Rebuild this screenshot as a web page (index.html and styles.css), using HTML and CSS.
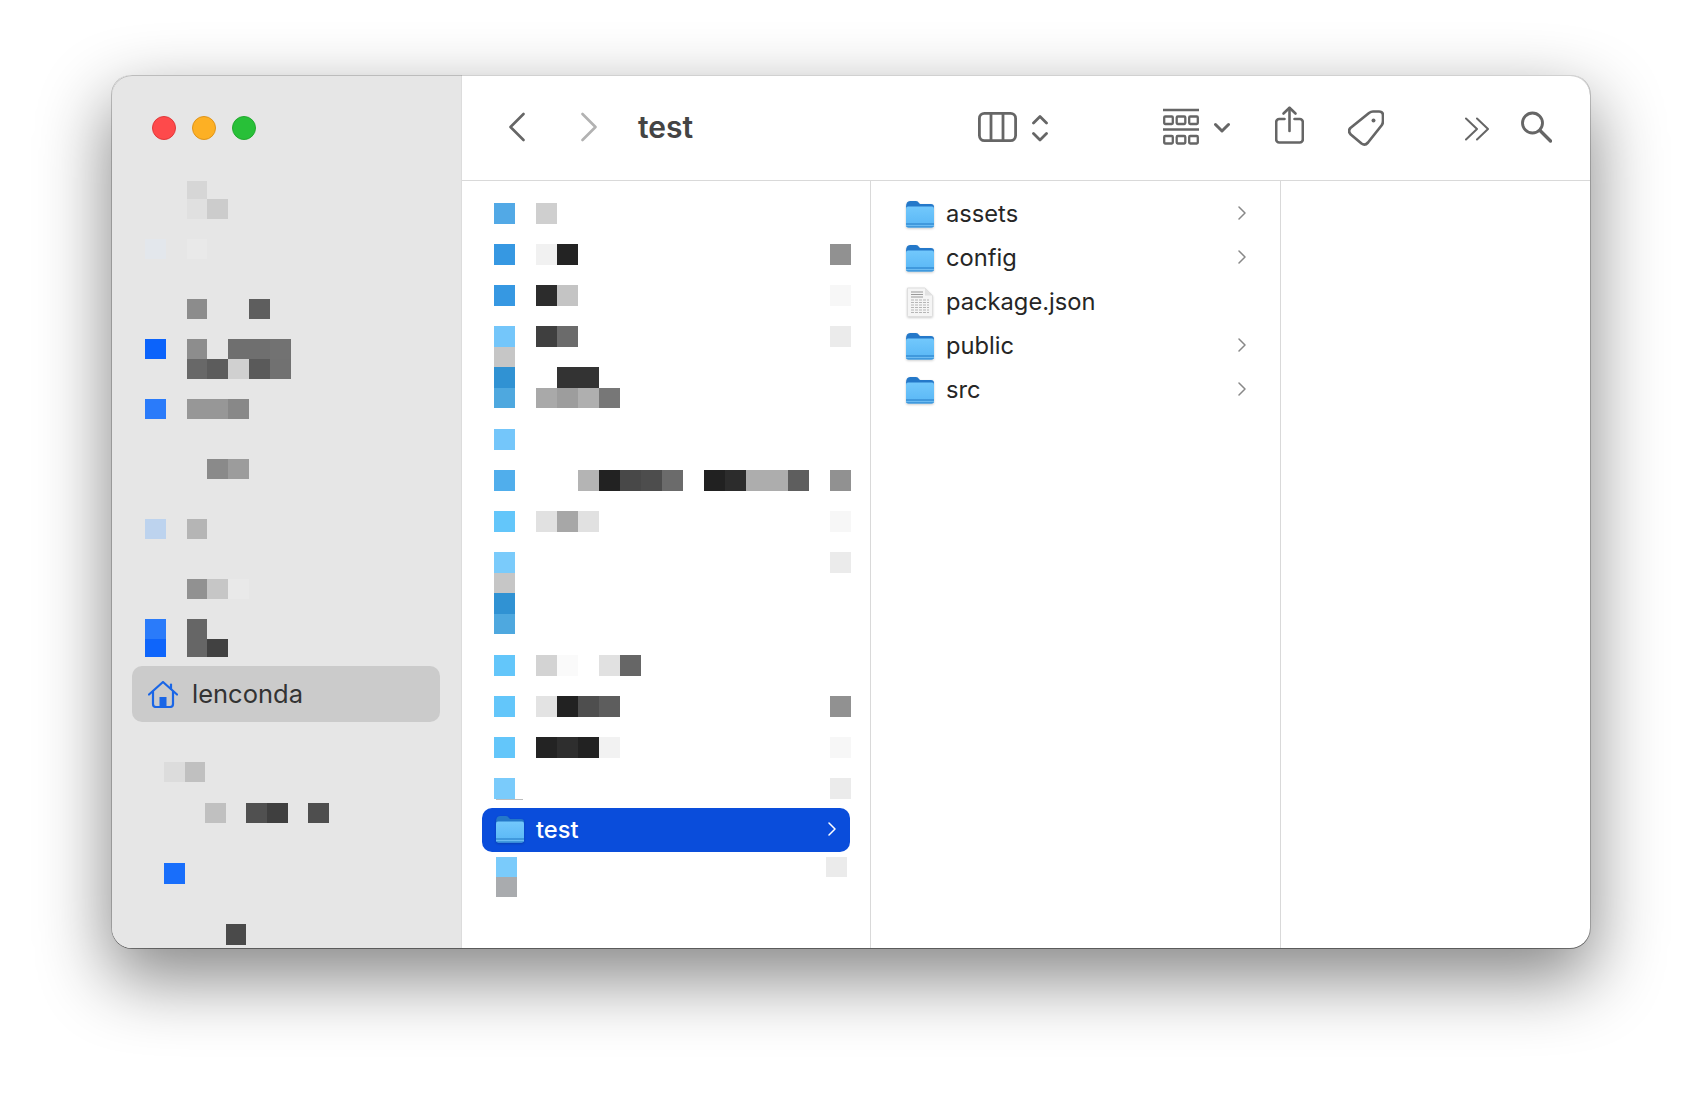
FILE: index.html
```html
<!DOCTYPE html>
<html lang="en">
<head>
    <meta charset="UTF-8">
    <meta name="viewport" content="width=device-width, initial-scale=1.0">
    <title>test</title>
    <link rel="stylesheet" href="styles.css">
</head>
<body>
    <svg class="defs" width="0" height="0">
        <defs>
            <linearGradient id="folderBody" x1="0" y1="0" x2="0" y2="1">
                <stop offset="0" stop-color="#72c8fc"/>
                <stop offset="1" stop-color="#58b6f5"/>
            </linearGradient>
            <symbol id="folder" viewBox="0 0 28 27">
                <path d="M0 6Q0 0 4 0H10Q12 0 13 2L14 3H25Q28 3 28 6V12H0Z" fill="#2478c9"/>
                <path d="M0 7.5Q0 5.5 2 5.5H26Q28 5.5 28 7.5V24Q28 26.5 25.5 26.5H2.5Q0 26.5 0 24Z" fill="url(#folderBody)"/>
                <path d="M0 22H28V24Q28 26.5 25.5 26.5H2.5Q0 26.5 0 24Z" fill="#4099dd"/>
                <path d="M0 24H28V24.8H0Z" fill="#78c4f6"/>
            </symbol>
            <symbol id="chevron" viewBox="0 0 8 14">
                <polyline points="1,1 7,7 1,13" fill="none" stroke="currentColor" stroke-width="1.5" stroke-linecap="round" stroke-linejoin="round"/>
            </symbol>
        </defs>
    </svg>

    <div class="window">
        <!-- Sidebar -->
        <aside class="sidebar">
            <div class="lights">
                <span class="light red"></span>
                <span class="light orange"></span>
                <span class="light green"></span>
            </div>

            <div class="side-top">
                <div class="side-row short"><i></i><i></i><i class="gd6"></i></div>
                <div class="side-row"><i></i><i></i><i class="ge0"></i><i class="gcc"></i></div>
                <div class="side-row"></div>
                <div class="side-row"><i class="s1"></i><i></i><i class="ge9"></i></div>
                <div class="side-row"></div>
                <div class="side-row"></div>
                <div class="side-row"><i></i><i></i><i class="g8c"></i><i></i><i></i><i class="g5e"></i></div>
                <div class="side-row"></div>
                <div class="side-row"><i class="s2"></i><i></i><i class="g8d"></i><i></i><i class="g6f"></i><i class="g6f"></i><i class="g72"></i></div>
                <div class="side-row"><i></i><i></i><i class="g68"></i><i class="g5c"></i><i class="gd0"></i><i class="g5a"></i><i class="g71"></i></div>
                <div class="side-row"></div>
                <div class="side-row"><i class="s3"></i><i></i><i class="g97"></i><i class="g97"></i><i class="g88"></i></div>
                <div class="side-row"></div>
                <div class="side-row"></div>
                <div class="side-row"><i></i><i></i><i></i><i class="g8a"></i><i class="g9c"></i></div>
                <div class="side-row"></div>
                <div class="side-row"></div>
                <div class="side-row"><i class="s4"></i><i></i><i class="gb5"></i></div>
                <div class="side-row"></div>
                <div class="side-row"></div>
                <div class="side-row"><i></i><i></i><i class="g91"></i><i class="gc6"></i><i class="ge9"></i></div>
                <div class="side-row"></div>
                <div class="side-row"><i class="s3"></i><i></i><i class="g66"></i></div>
                <div class="side-row short"><i class="s5"></i><i></i><i class="g66"></i><i class="g41"></i></div>
            </div>

            <div class="side-item">
                <svg class="home" width="30" height="27" viewBox="0 0 30 27" fill="none" stroke="#1a66e6" stroke-width="2.2" stroke-linecap="round" stroke-linejoin="round">
                    <path d="M1 13.5L15 1L29 13.5"/>
                    <path d="M23 8V3.5"/>
                    <path d="M5 10.5V23Q5 26 8 26H22Q25 26 25 23V10.5"/>
                    <rect x="11.5" y="16" width="7" height="10" fill="#1a66e6" stroke="none"/>
                </svg>
                <span class="side-label">lenconda</span>
            </div>

            <div class="side-bottom">
                <div class="low-row"><i class="gdc"></i><i class="gc0"></i></div>
                <div class="low-row"></div>
                <div class="low-row"><i></i><i></i><i class="gc0"></i><i></i><i class="g50"></i><i class="g3f"></i><i></i><i class="g4e"></i></div>
                <div class="low-row"></div>
                <div class="low-row"></div>
                <div class="low-row"><i class="s6"></i></div>
                <div class="low-row"></div>
                <div class="low-row"></div>
                <div class="low-row"><i></i><i></i><i></i><i class="g4a"></i></div>
            </div>
        </aside>

        <div class="content">
            <!-- Toolbar -->
            <header class="toolbar">
                <svg class="back" width="16" height="44" viewBox="0 0 16 44" fill="none" stroke="#666" stroke-width="2.6" stroke-linecap="round" stroke-linejoin="round">
                    <polyline points="14.5,8 1.5,21 14.5,34"/>
                </svg>
                <svg class="forward" width="16" height="44" viewBox="0 0 16 44" fill="none" stroke="#b2b2b2" stroke-width="2.6" stroke-linecap="round" stroke-linejoin="round">
                    <polyline points="1.5,8 14.5,21 1.5,34"/>
                </svg>
                <h1 class="title">test</h1>
                <svg width="39" height="44" viewBox="0 0 39 44" fill="none" stroke="#666" stroke-width="2.8">
                    <rect x="1.4" y="7.4" width="36.2" height="27.2" rx="5"/>
                    <path d="M13 7V35M25 7V35"/>
                </svg>
                <svg class="updown" width="16" height="44" viewBox="0 0 16 44" fill="none" stroke="#666" stroke-width="2.8" stroke-linecap="round" stroke-linejoin="round">
                    <polyline points="1.5,17 8,10.5 14.5,17"/>
                    <polyline points="1.5,27.5 8,34 14.5,27.5"/>
                </svg>
                <svg class="grid-view" width="36" height="44" viewBox="0 0 36 44" fill="none" stroke="#666" stroke-width="2.3">
                    <path d="M0 4H36M0 23.5H36"/>
                    <rect x="1.2" y="10.5" width="8.6" height="7.5" rx="1"/>
                    <rect x="13.7" y="10.5" width="8.6" height="7.5" rx="1"/>
                    <rect x="26.2" y="10.5" width="8.6" height="7.5" rx="1"/>
                    <rect x="1.2" y="30" width="8.6" height="7.5" rx="1"/>
                    <rect x="13.7" y="30" width="8.6" height="7.5" rx="1"/>
                    <rect x="26.2" y="30" width="8.6" height="7.5" rx="1"/>
                </svg>
                <svg class="caret" width="16" height="44" viewBox="0 0 16 44" fill="none" stroke="#666" stroke-width="3" stroke-linecap="round" stroke-linejoin="round">
                    <polyline points="1.5,18.5 8,25 14.5,18.5"/>
                </svg>
                <svg class="share" width="29" height="44" viewBox="0 0 29 44" fill="none" stroke="#666" stroke-width="2.6" stroke-linecap="round" stroke-linejoin="round">
                    <path d="M9.5 13H4.2A3 3 0 0 0 1.2 16V33.5A3 3 0 0 0 4.2 36.5H24.8A3 3 0 0 0 27.8 33.5V16A3 3 0 0 0 24.8 13H19.5"/>
                    <path d="M14.5 25V2"/>
                    <polyline points="8.5,7.5 14.5,1.8 20.5,7.5"/>
                </svg>
                <svg class="tag" width="36" height="44" viewBox="0 0 36 44" fill="none" stroke="#666" stroke-width="2.7" stroke-linejoin="round">
                    <path d="M2.4 22L21 7Q23 5.5 25 5.5H31Q35 5.5 35 9.5V15Q35 17.5 33.5 19.5L20 36.5Q17 40 13.5 37.5L2.8 28.5Q-0.5 25 2.4 22Z"/>
                    <circle cx="25.5" cy="14.5" r="2" fill="#666" stroke="none"/>
                </svg>
                <svg class="more" width="24" height="44" viewBox="0 0 24 44" fill="none" stroke="#666" stroke-width="2" stroke-linecap="round" stroke-linejoin="round">
                    <polyline points="1,12.5 12,23 1,33.5"/>
                    <polyline points="12,12.5 23,23 12,33.5"/>
                </svg>
                <svg class="search" width="31" height="44" viewBox="0 0 31 44" fill="none" stroke="#666" stroke-width="2.9" stroke-linecap="round">
                    <circle cx="11.5" cy="17" r="10"/>
                    <path d="M19 24.5L29.5 35" stroke-width="3.4"/>
                </svg>
            </header>

            <main class="columns">
                <!-- First column -->
                <section class="column first">
                    <div class="file-row"><i class="c1"></i><i></i><i class="gcf"></i></div>
                    <div class="file-row"></div>
                    <div class="file-row"><i class="c2"></i><i></i><i class="gf1"></i><i class="g23"></i><i></i><i></i><i></i><i></i><i></i><i></i><i></i><i></i><i></i><i></i><i></i><i></i><i class="g91"></i></div>
                    <div class="file-row"></div>
                    <div class="file-row"><i class="c2"></i><i></i><i class="g2c"></i><i class="gc4"></i><i></i><i></i><i></i><i></i><i></i><i></i><i></i><i></i><i></i><i></i><i></i><i></i><i class="gf7"></i></div>
                    <div class="file-row"></div>
                    <div class="file-row"><i class="c3"></i><i></i><i class="g3f"></i><i class="g6b"></i><i></i><i></i><i></i><i></i><i></i><i></i><i></i><i></i><i></i><i></i><i></i><i></i><i class="geb"></i></div>
                    <div class="file-row"><i class="gc6"></i></div>
                    <div class="file-row"><i class="c4"></i><i></i><i></i><i class="g33"></i><i class="g33"></i></div>
                    <div class="file-row"><i class="c5"></i><i></i><i class="ga9"></i><i class="g9d"></i><i class="gaf"></i><i class="g77"></i></div>
                    <div class="file-row"></div>
                    <div class="file-row"><i class="c3"></i></div>
                    <div class="file-row"></div>
                    <div class="file-row"><i class="c6"></i><i></i><i></i><i></i><i class="gb4"></i><i class="g22"></i><i class="g48"></i><i class="g4d"></i><i class="g6b"></i><i></i><i class="g21"></i><i class="g2c"></i><i class="gad"></i><i class="gad"></i><i class="g5e"></i><i></i><i class="g91"></i></div>
                    <div class="file-row"></div>
                    <div class="file-row"><i class="c7"></i><i></i><i class="ge1"></i><i class="ga7"></i><i class="ge1"></i><i></i><i></i><i></i><i></i><i></i><i></i><i></i><i></i><i></i><i></i><i></i><i class="gf7"></i></div>
                    <div class="file-row"></div>
                    <div class="file-row"><i class="c8"></i><i></i><i></i><i></i><i></i><i></i><i></i><i></i><i></i><i></i><i></i><i></i><i></i><i></i><i></i><i></i><i class="geb"></i></div>
                    <div class="file-row"><i class="gc6"></i></div>
                    <div class="file-row"><i class="c4"></i></div>
                    <div class="file-row"><i class="c5"></i></div>
                    <div class="file-row"></div>
                    <div class="file-row"><i class="c7"></i><i></i><i class="gd3"></i><i class="gfa"></i><i></i><i class="ge1"></i><i class="g66"></i></div>
                    <div class="file-row"></div>
                    <div class="file-row"><i class="c7"></i><i></i><i class="ge3"></i><i class="g22"></i><i class="g4e"></i><i class="g5d"></i><i></i><i></i><i></i><i></i><i></i><i></i><i></i><i></i><i></i><i></i><i class="g91"></i></div>
                    <div class="file-row"></div>
                    <div class="file-row"><i class="c7"></i><i></i><i class="g23"></i><i class="g2e"></i><i class="g22"></i><i class="gf2"></i><i></i><i></i><i></i><i></i><i></i><i></i><i></i><i></i><i></i><i></i><i class="gf7"></i></div>
                    <div class="file-row"></div>
                    <div class="file-row"><i class="c8"></i><i></i><i></i><i></i><i></i><i></i><i></i><i></i><i></i><i></i><i></i><i></i><i></i><i></i><i></i><i></i><i class="geb"></i></div>
                    <div class="clip-line"></div>

                    <div class="entry active">
                        <svg class="folder" width="28" height="27"><use href="#folder"/></svg>
                        <span>test</span>
                        <svg class="arrow" width="8" height="14"><use href="#chevron"/></svg>
                    </div>

                    <div class="after-row"><i class="c8"></i><i class="geb"></i></div>
                    <div class="after-row"><i class="gab"></i></div>
                </section>

                <!-- Second column -->
                <section class="column second">
                    <div class="entry">
                        <svg class="folder" width="28" height="27"><use href="#folder"/></svg>
                        <span>assets</span>
                        <svg class="arrow" width="8" height="14"><use href="#chevron"/></svg>
                    </div>
                    <div class="entry">
                        <svg class="folder" width="28" height="27"><use href="#folder"/></svg>
                        <span>config</span>
                        <svg class="arrow" width="8" height="14"><use href="#chevron"/></svg>
                    </div>
                    <div class="entry">
                        <svg class="folder" width="28" height="30" viewBox="0 0 28 30">
                            <path d="M1.5 1H19L26.5 8.5V28.5Q26.5 29.5 25.5 29.5H2.5Q1.5 29.5 1.5 28.5Z" fill="#f5f5f5" stroke="#dedede"/>
                            <path d="M19 1V8.5H26.5Z" fill="#e2e2e2"/>
                            <path d="M5 5H17M5 7.5H17M5 10H17" stroke="#9a9a9a" stroke-width="1.2"/>
                            <path d="M5 13H23M5 15.5H23M5 18H23M5 20.5H23M5 23H23M5 25.5H23" stroke="#b5b5b5" stroke-width="1.2" stroke-dasharray="3 1"/>
                        </svg>
                        <span>package.json</span>
                    </div>
                    <div class="entry">
                        <svg class="folder" width="28" height="27"><use href="#folder"/></svg>
                        <span>public</span>
                        <svg class="arrow" width="8" height="14"><use href="#chevron"/></svg>
                    </div>
                    <div class="entry">
                        <svg class="folder" width="28" height="27"><use href="#folder"/></svg>
                        <span>src</span>
                        <svg class="arrow" width="8" height="14"><use href="#chevron"/></svg>
                    </div>
                </section>

                <section class="column last"></section>
            </main>
        </div>
    </div>
</body>
</html>
```

FILE: styles.css
```css
/* Global Styles */
body {
    margin: 0;
    height: 1096px;
    overflow: hidden;
    background-color: #ffffff;
    font-family: 'Inter', 'Noto Sans', sans-serif;
    color: #262626;
}
.defs {
    display: block;
    height: 0;
}
i {
    display: block;
}

/* Window */
.window {
    position: relative;
    display: flex;
    width: 1478px;
    height: 873px;
    margin: 75px 0 0 112px;
    border-radius: 20px;
    overflow: hidden;
    background: #ffffff;
    box-shadow: -1px 0 0 rgba(0, 0, 0, 0.2), 1px 0 0 rgba(0, 0, 0, 0.2), 0 1px 0 rgba(0, 0, 0, 0.42), 0 28px 70px 3px rgba(0, 0, 0, 0.47);
}
.window::after {
    content: "";
    position: absolute;
    inset: 0;
    border-radius: 20px;
    pointer-events: none;
    box-shadow: inset 0 1px 0 rgba(0, 0, 0, 0.18);
}

/* Sidebar */
.sidebar {
    flex: 0 0 350px;
    box-sizing: border-box;
    background: #e6e6e6;
    border-right: 1px solid #dcdcdc;
}
.lights {
    display: flex;
    gap: 16px;
    padding: 41px 0 0 40px;
}
.light {
    box-sizing: border-box;
    width: 24px;
    height: 24px;
    border-radius: 50%;
    border: 1px solid;
}
.red {
    background: #fe4a4b;
    border-color: #e0393a;
}
.orange {
    background: #fdb024;
    border-color: #df941a;
}
.green {
    background: #28c038;
    border-color: #23a92f;
}
.side-top {
    margin: 41px 0 0 33px;
}
.side-row {
    display: grid;
    grid-template-columns: repeat(7, 20.8px);
    grid-auto-rows: 20px;
    height: 20px;
}
.side-row.short,
.side-row.short i {
    height: 18px;
}
.side-item {
    display: flex;
    align-items: center;
    width: 308px;
    height: 56px;
    margin: 9px 0 0 20px;
    padding-left: 16px;
    box-sizing: border-box;
    background: #cbcbcb;
    border-radius: 10px;
}
.side-label {
    margin-left: 14px;
    font-size: 25.5px;
    line-height: 58px;
    color: #333333;
}
.side-bottom {
    margin: 40px 0 0 52px;
}
.low-row {
    display: grid;
    grid-template-columns: repeat(8, 20.6px);
    height: 20.3px;
}

/* Toolbar */
.content {
    flex: 1;
    display: flex;
    flex-direction: column;
    min-width: 0;
}
.toolbar {
    display: flex;
    align-items: flex-start;
    flex: 0 0 106px;
    box-sizing: border-box;
    padding: 31px 0 0 47px;
    border-bottom: 1px solid #d9d9d9;
    color: #666666;
}
.toolbar svg {
    flex: none;
}
.forward { margin-left: 56px; }
.title {
    width: 339px;
    margin: 0 0 0 41px;
    font-size: 30px;
    line-height: 42px;
    font-weight: 600;
    color: #444444;
}
.updown { margin-left: 15px; }
.grid-view { margin-left: 115px; }
.caret { margin-left: 15px; }
.share { margin-left: 45px; }
.tag { margin-left: 44px; }
.more { margin-left: 81px; }
.search { margin-left: 32px; }
svg.back + svg.forward + .title + svg { margin-left: 1px; }

/* Columns */
.columns {
    flex: 1;
    display: flex;
    min-height: 0;
}
.column {
    box-sizing: border-box;
    border-right: 1px solid #d9d9d9;
}
.first {
    flex: 0 0 409px;
    padding: 22px 0 0 32px;
}
.second {
    flex: 0 0 410px;
    padding: 11px 0 0 35px;
}
.last {
    flex: 1;
    border-right: 0;
}
.file-row {
    display: grid;
    grid-template-columns: repeat(17, 21px);
    height: 20.55px;
}
.clip-line {
    width: 27px;
    height: 1px;
    margin-left: 2px;
    background: #bdbdbd;
}
.after-row {
    display: flex;
    justify-content: space-between;
    width: 351px;
    height: 20px;
    margin-left: 2px;
}
.after-row i {
    width: 21px;
}
.entry {
    display: flex;
    align-items: center;
    gap: 12px;
    width: 340px;
    height: 44px;
    font-size: 23.7px;
    line-height: 42px;
}
.entry .folder {
    flex: none;
    overflow: visible;
    filter: drop-shadow(0 1px 1px rgba(0, 0, 0, 0.2));
}
.arrow {
    margin: 0 0 2px auto;
    color: #888888;
}
.active {
    box-sizing: border-box;
    width: 368px;
    margin: 8px 0 5px -12px;
    padding: 0 14px;
    background: #0a4ddb;
    border-radius: 10px;
    color: #ffffff;
    font-weight: 500;
}
.active .arrow {
    color: #ffffff;
}

/* Blurred pixels */
.s1 { background: #e3e7ec; }
.s2 { background: #0b63fb; }
.s3 { background: #2a7bfa; }
.s4 { background: #bdd3ee; }
.s5 { background: #0e65fb; }
.s6 { background: #186efb; }
.c1 { background: #52a9e6; }
.c2 { background: #3698e2; }
.c3 { background: #74c6fa; }
.c4 { background: #3092d3; }
.c5 { background: #4ea8df; }
.c6 { background: #50aeec; }
.c7 { background: #63c6fa; }
.c8 { background: #7acbfb; }
.g21 { background: #212121; }
.g22 { background: #222222; }
.g23 { background: #232323; }
.g2c { background: #2c2c2c; }
.g2e { background: #2e2e2e; }
.g33 { background: #333333; }
.g3f { background: #3f3f3f; }
.g41 { background: #414141; }
.g48 { background: #484848; }
.g4a { background: #4a4a4a; }
.g4d { background: #4d4d4d; }
.g4e { background: #4e4e4e; }
.g50 { background: #505050; }
.g5a { background: #5a5a5a; }
.g5c { background: #5c5c5c; }
.g5d { background: #5d5d5d; }
.g5e { background: #5e5e5e; }
.g66 { background: #666666; }
.g68 { background: #686868; }
.g6b { background: #6b6b6b; }
.g6f { background: #6f6f6f; }
.g71 { background: #717171; }
.g72 { background: #727272; }
.g77 { background: #777777; }
.g88 { background: #888888; }
.g8a { background: #8a8a8a; }
.g8c { background: #8c8c8c; }
.g8d { background: #8d8d8d; }
.g91 { background: #919191; }
.g97 { background: #979797; }
.g9c { background: #9c9c9c; }
.g9d { background: #9d9d9d; }
.ga7 { background: #a7a7a7; }
.ga9 { background: #a9a9a9; }
.gab { background: #a9abae; }
.gad { background: #adadad; }
.gaf { background: #afafaf; }
.gb4 { background: #b4b4b4; }
.gb5 { background: #b5b5b5; }
.gc0 { background: #c0c0c0; }
.gc4 { background: #c4c4c4; }
.gc6 { background: #c6c6c6; }
.gcc { background: #cccccc; }
.gcf { background: #cfcfcf; }
.gd0 { background: #d0d0d0; }
.gd3 { background: #d3d3d3; }
.gd6 { background: #d6d6d6; }
.gdc { background: #dcdcdc; }
.ge0 { background: #e0e0e0; }
.ge1 { background: #e1e1e1; }
.ge3 { background: #e3e3e3; }
.ge9 { background: #e9e9e9; }
.geb { background: #ebebeb; }
.gf1 { background: #f1f1f1; }
.gf2 { background: #f2f2f2; }
.gf7 { background: #f7f7f7; }
.gfa { background: #fafafa; }
```
